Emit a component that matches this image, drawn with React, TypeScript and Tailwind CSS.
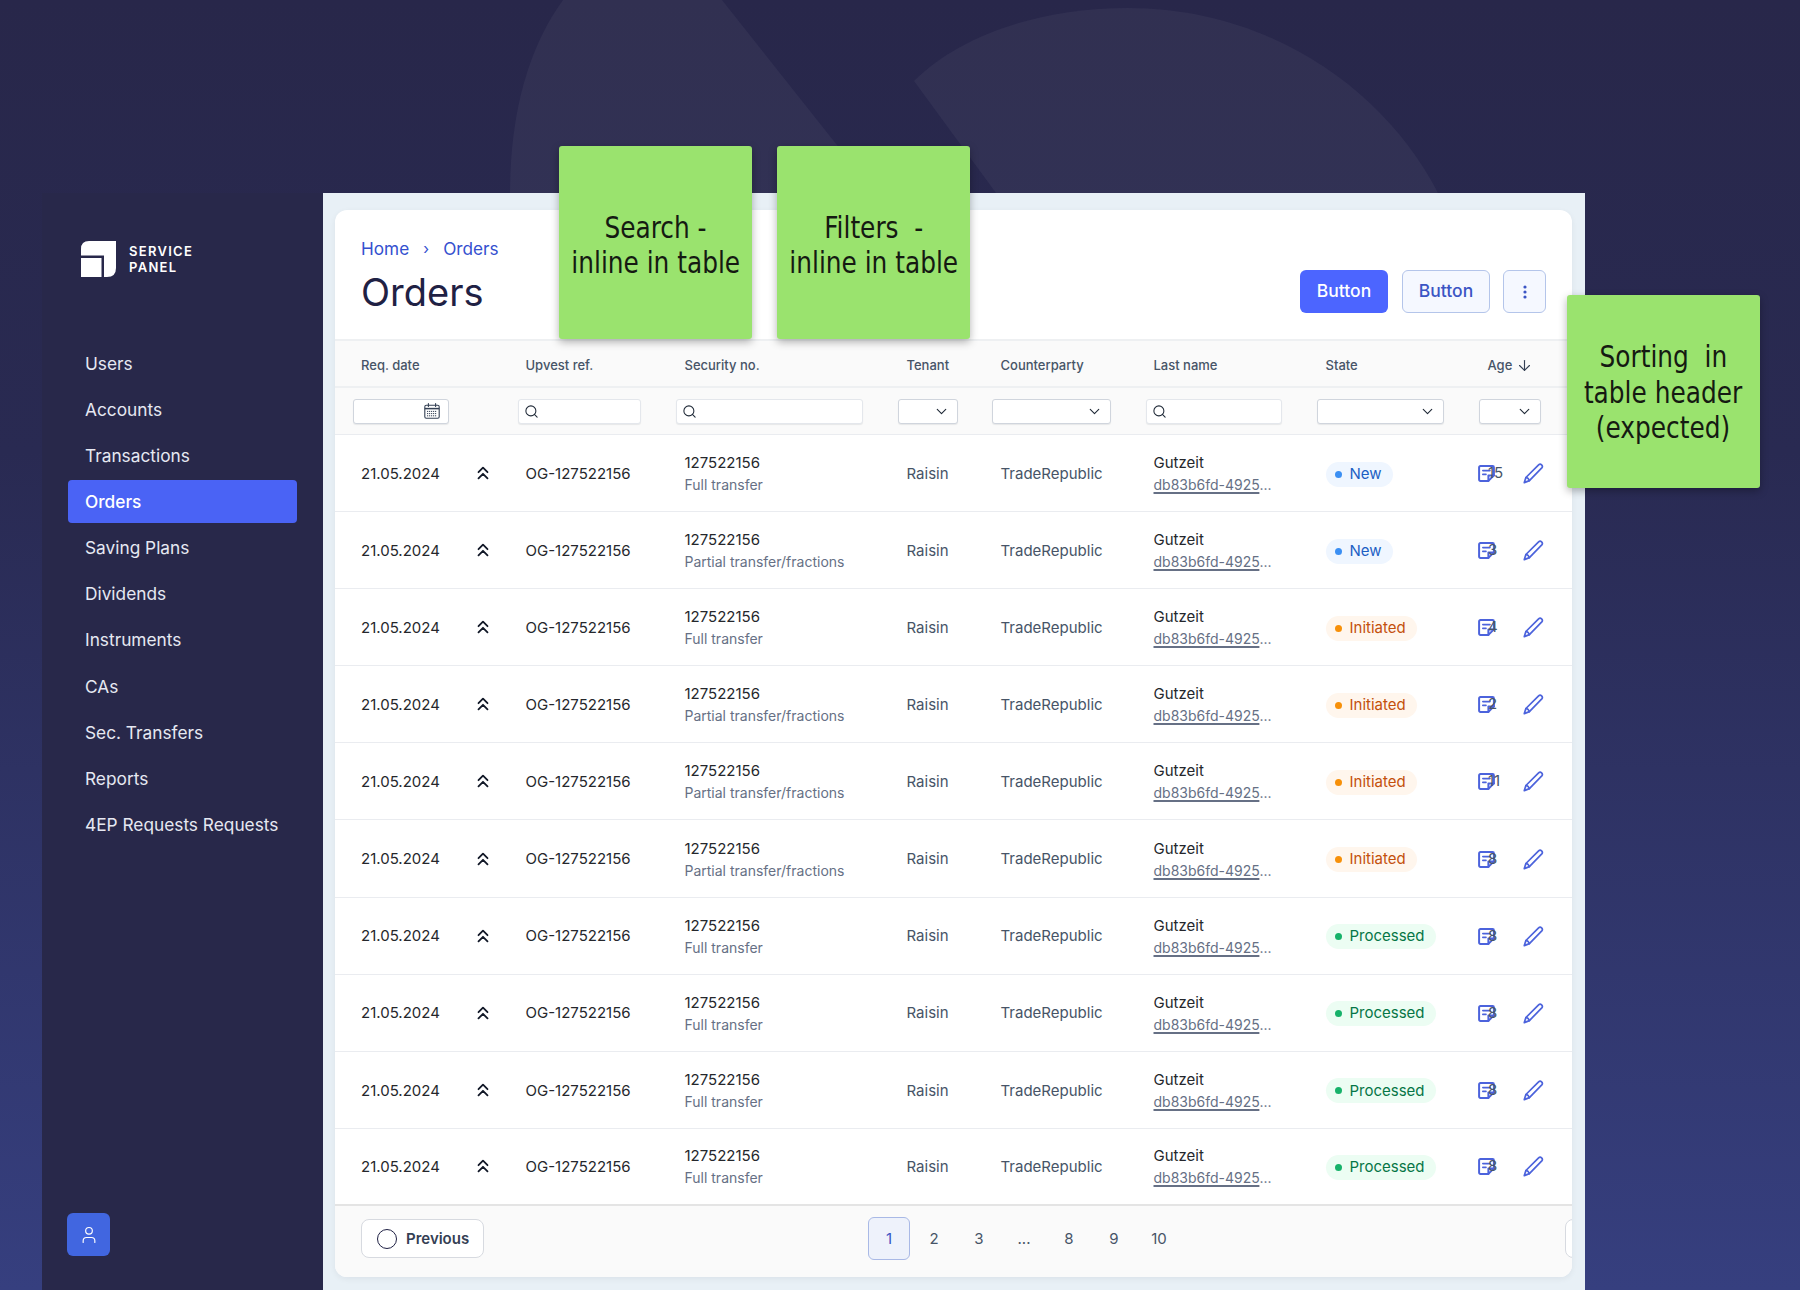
import { ArrowDown, ChevronDown, Search, User } from "lucide-react";

const nav = ["Users","Accounts","Transactions","Orders","Saving Plans","Dividends","Instruments","CAs","Sec. Transfers","Reports","4EP Requests Requests"];

type St = "New" | "Initiated" | "Processed";
const rows: { sub: string; st: St; n: string }[] = [
  { sub: "Full transfer", st: "New", n: "15" },
  { sub: "Partial transfer/fractions", st: "New", n: "3" },
  { sub: "Full transfer", st: "Initiated", n: "4" },
  { sub: "Partial transfer/fractions", st: "Initiated", n: "2" },
  { sub: "Partial transfer/fractions", st: "Initiated", n: "11" },
  { sub: "Partial transfer/fractions", st: "Initiated", n: "8" },
  { sub: "Full transfer", st: "Processed", n: "8" },
  { sub: "Full transfer", st: "Processed", n: "8" },
  { sub: "Full transfer", st: "Processed", n: "8" },
  { sub: "Full transfer", st: "Processed", n: "8" },
];

const stCls: Record<St, { pill: string; dot: string }> = {
  New: { pill: "bg-[#eff6ff] text-[#1d5fc4]", dot: "bg-[#3b8ff3]" },
  Initiated: { pill: "bg-[#fff6ed] text-[#c4500c]", dot: "bg-[#f79009]" },
  Processed: { pill: "bg-[#ecfdf3] text-[#067647]", dot: "bg-[#17b26a]" },
};

const grid = "grid grid-cols-[190.5px_159px_222px_94px_153px_172px_162px_84.5px]";

function Sticky({ lines, cls }: { lines: string[]; cls: string }) {
  return (
    <div className={`absolute w-[193px] h-[193px] rounded-[3px] bg-[#9ae36e] shadow-[0_3px_8px_rgba(0,0,0,0.3)] flex flex-col items-center justify-center text-[#151a12] text-[30px] leading-[35.5px] font-['DejaVu_Sans_Condensed',sans-serif] whitespace-pre ${cls}`}>
      {lines.map((l) => <div key={l} className="scale-x-[0.92]">{l}</div>)}
    </div>
  );
}

function Notes({ n }: { n: string }) {
  return (
    <span className="relative inline-block w-[17px] h-[17px]">
      <svg width="17" height="17" viewBox="0 0 17 17" fill="none" className="absolute left-0 top-0 text-[#4c63dc]" stroke="currentColor" strokeWidth="2" strokeLinejoin="round" strokeLinecap="round">
        <path d="M2.4 1.1H14.6a1.3 1.3 0 0 1 1.3 1.3V10.4L10.4 15.9H2.4a1.3 1.3 0 0 1-1.3-1.3V2.4a1.3 1.3 0 0 1 1.3-1.3Z" />
        <path d="M10.4 15.9V10.6H15.9" />
        <path d="M4.8 5.6H12M4.8 9.4H8" strokeWidth="1.6" />
      </svg>
      <span className="absolute left-[10.5px] top-[-2px] text-[15px] leading-[20px] text-[#475467]">{n}</span>
    </span>
  );
}

function Pencil() {
  return (
    <svg width="21" height="21" viewBox="0 0 21 21" fill="none" stroke="#4c63dc" strokeWidth="1.7" strokeLinejoin="round" strokeLinecap="round">
      <path d="M15.6 1.9a2.2 2.2 0 0 1 3.2 3L6.4 17.6 1.3 19.6l1.6-5.1L15.6 1.9Z" />
      <path d="M2.9 14.5c1.6.2 2.9 1.4 3.5 3.1" />
    </svg>
  );
}

function Chevs() {
  return (
    <svg width="12" height="14" viewBox="0 0 12 14" fill="none" stroke="#111827" strokeWidth="1.8" strokeLinejoin="round" strokeLinecap="round" className="-mt-[2px]">
      <path d="M1.5 6.2 6 1.6l4.5 4.6" />
      <path d="M1.5 12.4 6 7.8l4.5 4.6" />
    </svg>
  );
}

function Calendar() {
  return (
    <svg width="16" height="16" viewBox="0 0 16 16" fill="none" stroke="#344054" strokeWidth="1.1">
      <rect x="0.8" y="2.2" width="14.4" height="13" rx="1.5" />
      <path d="M0.8 5.6H15.2" strokeWidth="1.5" />
      <path d="M4.4 0.6V3.4M11.6 0.6V3.4" strokeLinecap="round" />
      <path d="M3 8.4H13M3 10.6H13M3 12.8H13" strokeDasharray="1.2 0.8" strokeWidth="1" />
    </svg>
  );
}

const inputCls = "flex items-center h-[25px] rounded-[3px] bg-white border border-[#d0d5dd] shadow-[0_1px_1px_rgba(16,24,40,0.08)] shrink-0";

function Sel({ w, ml }: { w: string; ml: string }) {
  return (
    <div className={`${inputCls} justify-end pr-[7px] ${w} ${ml}`}>
      <ChevronDown size={17} strokeWidth={1.6} className="text-[#1f2937]" />
    </div>
  );
}
function Srch({ w, ml }: { w: string; ml: string }) {
  return (
    <div className={`${inputCls} border-[#e4e7ec] pl-[5px] ${w} ${ml}`}>
      <Search size={15} strokeWidth={1.7} className="text-[#1f2937]" />
    </div>
  );
}

export default function App() {
  return (
    <div className="relative w-[1800px] h-[1290px] overflow-hidden bg-[linear-gradient(180deg,#28274a_0%,#292a52_35%,#363f7f_100%)] font-['Inter',sans-serif]">
      <svg width="1800" height="200" className="absolute left-0 top-0" fill="#ffffff" fillOpacity="0.045">
        <path d="M510 193C510 110 530 45 563 0H722L875 193Z" />
        <path d="M914 81C960 35 1040 8 1128 8C1270 8 1385 90 1438 193H996Z" />
      </svg>

      <div className="relative flex pl-[42px] pt-[193px] h-full">
        <aside className="w-[281px] bg-[#28284a] flex flex-col shrink-0">
          <div className="flex items-center gap-[13px] pl-[39px] pt-[48px]">
            <svg width="35" height="36" viewBox="0 0 35 36" fill="#ffffff">
              <path d="M8 0H35V27Q35 36 26 36H23V14.5H0V8Q0 0 8 0Z" />
              <path d="M0 17H20.5V36H0Z" />
            </svg>
            <div className="text-white text-[13px] leading-[16px] font-semibold tracking-[1.3px]">SERVICE<br />PANEL</div>
          </div>
          <nav className="mt-[65px] pl-[26px] pr-[26px] flex flex-col">
            {nav.map((n) => (
              <div key={n} className={`h-[43px] mb-[3.15px] rounded-[4px] pl-[17px] flex items-center text-[17.3px] whitespace-nowrap ${n === "Orders" ? "bg-[#4a63f5] text-white font-medium" : "text-[#e6e8f2]"}`}>{n}</div>
            ))}
          </nav>
          <div className="mt-auto ml-[25px] mb-[34px] w-[43px] h-[43px] rounded-[6px] bg-[#4166e0] flex items-center justify-center">
            <User size={20} strokeWidth={1.4} className="text-white" />
          </div>
        </aside>

        <main className="w-[1262px] bg-[#e8f0f6] pl-[12px] pr-[13px] pt-[17px] pb-[13px] flex">
          <div className="w-[1237px] h-full rounded-[12px] bg-white shadow-[0_2px_6px_rgba(16,24,40,0.06)] overflow-hidden flex flex-col">
            <header className="h-[129px] flex justify-between items-end pl-[26px] pr-[26px] pb-[26px] relative shrink-0">
              <div className="self-start pt-[28px]">
                <div className="flex items-center text-[17.2px] leading-[22px] text-[#3450cf]">
                  <span>Home</span>
                  <span className="w-[34px] text-center text-[15px]">›</span>
                  <span>Orders</span>
                </div>
                <h1 className="text-[38px] leading-[48px] font-normal text-[#1f2144] mt-[8px]">Orders</h1>
              </div>
              <div className="flex items-center">
                <button className="w-[88px] h-[43px] rounded-[6px] bg-[#4c65ff] text-white text-[17.5px] font-medium">Button</button>
                <button className="w-[88px] h-[43px] rounded-[6px] ml-[14px] bg-[#f5f8ff] border border-[#b4c5ea] text-[#3b55c4] text-[17.5px] font-medium">Button</button>
                <button className="w-[43px] h-[43px] rounded-[6px] ml-[13px] bg-[#f5f8ff] border border-[#b4c5ea] flex items-center justify-center">
                  <svg width="4" height="14" viewBox="0 0 4 14" fill="#3b55c4"><circle cx="2" cy="2" r="1.6" /><circle cx="2" cy="7" r="1.6" /><circle cx="2" cy="12" r="1.6" /></svg>
                </button>
              </div>
            </header>

            <div className={`${grid} h-[49px] pt-[4px] shrink-0 items-center bg-[#fafafa] border-t-2 border-b-2 border-[#eef0f2] text-[13px] font-medium text-[#475467]`}>
              <div className="pl-[26px]">Req. date</div>
              <div>Upvest ref.</div>
              <div>Security no.</div>
              <div>Tenant</div>
              <div>Counterparty</div>
              <div>Last name</div>
              <div>State</div>
              <div className="flex items-center gap-[4px]">Age <ArrowDown size={17} strokeWidth={1.6} className="text-[#344054]" /></div>
            </div>

            <div className="h-[47px] shrink-0 flex items-center bg-[#fafafa] border-b border-[#eaecf0] pl-[18px]">
              <div className={`${inputCls} justify-end pr-[8px] w-[96px]`}><Calendar /></div>
              <Srch w="w-[123px]" ml="ml-[69px]" />
              <Srch w="w-[187px]" ml="ml-[35px]" />
              <Sel w="w-[60px]" ml="ml-[35px]" />
              <Sel w="w-[119px]" ml="ml-[34px]" />
              <Srch w="w-[136px]" ml="ml-[35px]" />
              <Sel w="w-[127px]" ml="ml-[35px]" />
              <Sel w="w-[62px]" ml="ml-[35px]" />
            </div>

            <div className="shrink-0">
              {rows.map((r, i) => (
                <div key={i} className={`${grid} h-[77.1px] pt-[2px] items-center border-b text-[15px] ${i === 9 ? "border-b-2 border-[#e4e4e4]" : "border-[#eaecf0]"}`}>
                  <div className="pl-[26px] flex items-center text-[#25272c]">
                    <span className="w-[116px]">21.05.2024</span>
                    <Chevs />
                  </div>
                  <div className="text-[#25272c]">OG-127522156</div>
                  <div className="leading-[22px]">
                    <div className="text-[#25272c]">127522156</div>
                    <div className="text-[#667085] text-[14px]">{r.sub}</div>
                  </div>
                  <div className="text-[#475467]">Raisin</div>
                  <div className="text-[#475467]">TradeRepublic</div>
                  <div className="leading-[22px]">
                    <div className="text-[#25272c]">Gutzeit</div>
                    <div className="text-[#667085] text-[14px]"><span className="underline decoration-[#667085] decoration-[1.5px] underline-offset-2">db83b6fd-4925</span>...</div>
                  </div>
                  <div>
                    <span className={`inline-flex items-center gap-[8px] h-[25px] rounded-full pl-[9px] pr-[11px] ${stCls[r.st].pill}`}>
                      <span className={`w-[7px] h-[7px] rounded-full ${stCls[r.st].dot}`} />
                      {r.st}
                    </span>
                  </div>
                  <div className="flex items-center -ml-[10px] -mt-[1px]">
                    <Notes n={r.n} />
                    <span className="ml-[28px]"><Pencil /></span>
                  </div>
                </div>
              ))}
            </div>

            <footer className="flex-1 bg-[#fafafa] relative flex items-center pl-[26px] pb-[5px]">
              <button className="w-[123px] h-[39px] rounded-[8px] bg-white border border-[#d7dae0] flex items-center pl-[15px] gap-[9px] text-[15px] font-semibold text-[#344054] shrink-0">
                <span className="w-[20px] h-[20px] rounded-full border-[1.5px] border-[#1f2144]" />
                Previous
              </button>
              <div className="ml-[384px] flex items-center gap-[3px] text-[15px] text-[#475467]">
                {["1","2","3","...","8","9","10"].map((p) => (
                  <span key={p} className={`w-[42px] h-[43px] flex items-center justify-center rounded-[6px] ${p === "1" ? "bg-[#eef2fb] border border-[#a9b9e6] text-[#3b55c4]" : ""}`}>{p}</span>
                ))}
              </div>
              <div className="absolute left-[1230px] top-[13px] w-[40px] h-[39px] rounded-[8px] bg-white border border-[#d7dae0]" />
            </footer>
          </div>
        </main>
      </div>

      <Sticky lines={["Search -", "inline in table"]} cls="left-[559px] top-[146px] pt-[5px]" />
      <Sticky lines={["Filters  -", "inline in table"]} cls="left-[777px] top-[146px] pt-[5px]" />
      <Sticky lines={["Sorting  in", "table header", "(expected)"]} cls="left-[1567px] top-[295px] pt-[2px]" />
    </div>
  );
}
